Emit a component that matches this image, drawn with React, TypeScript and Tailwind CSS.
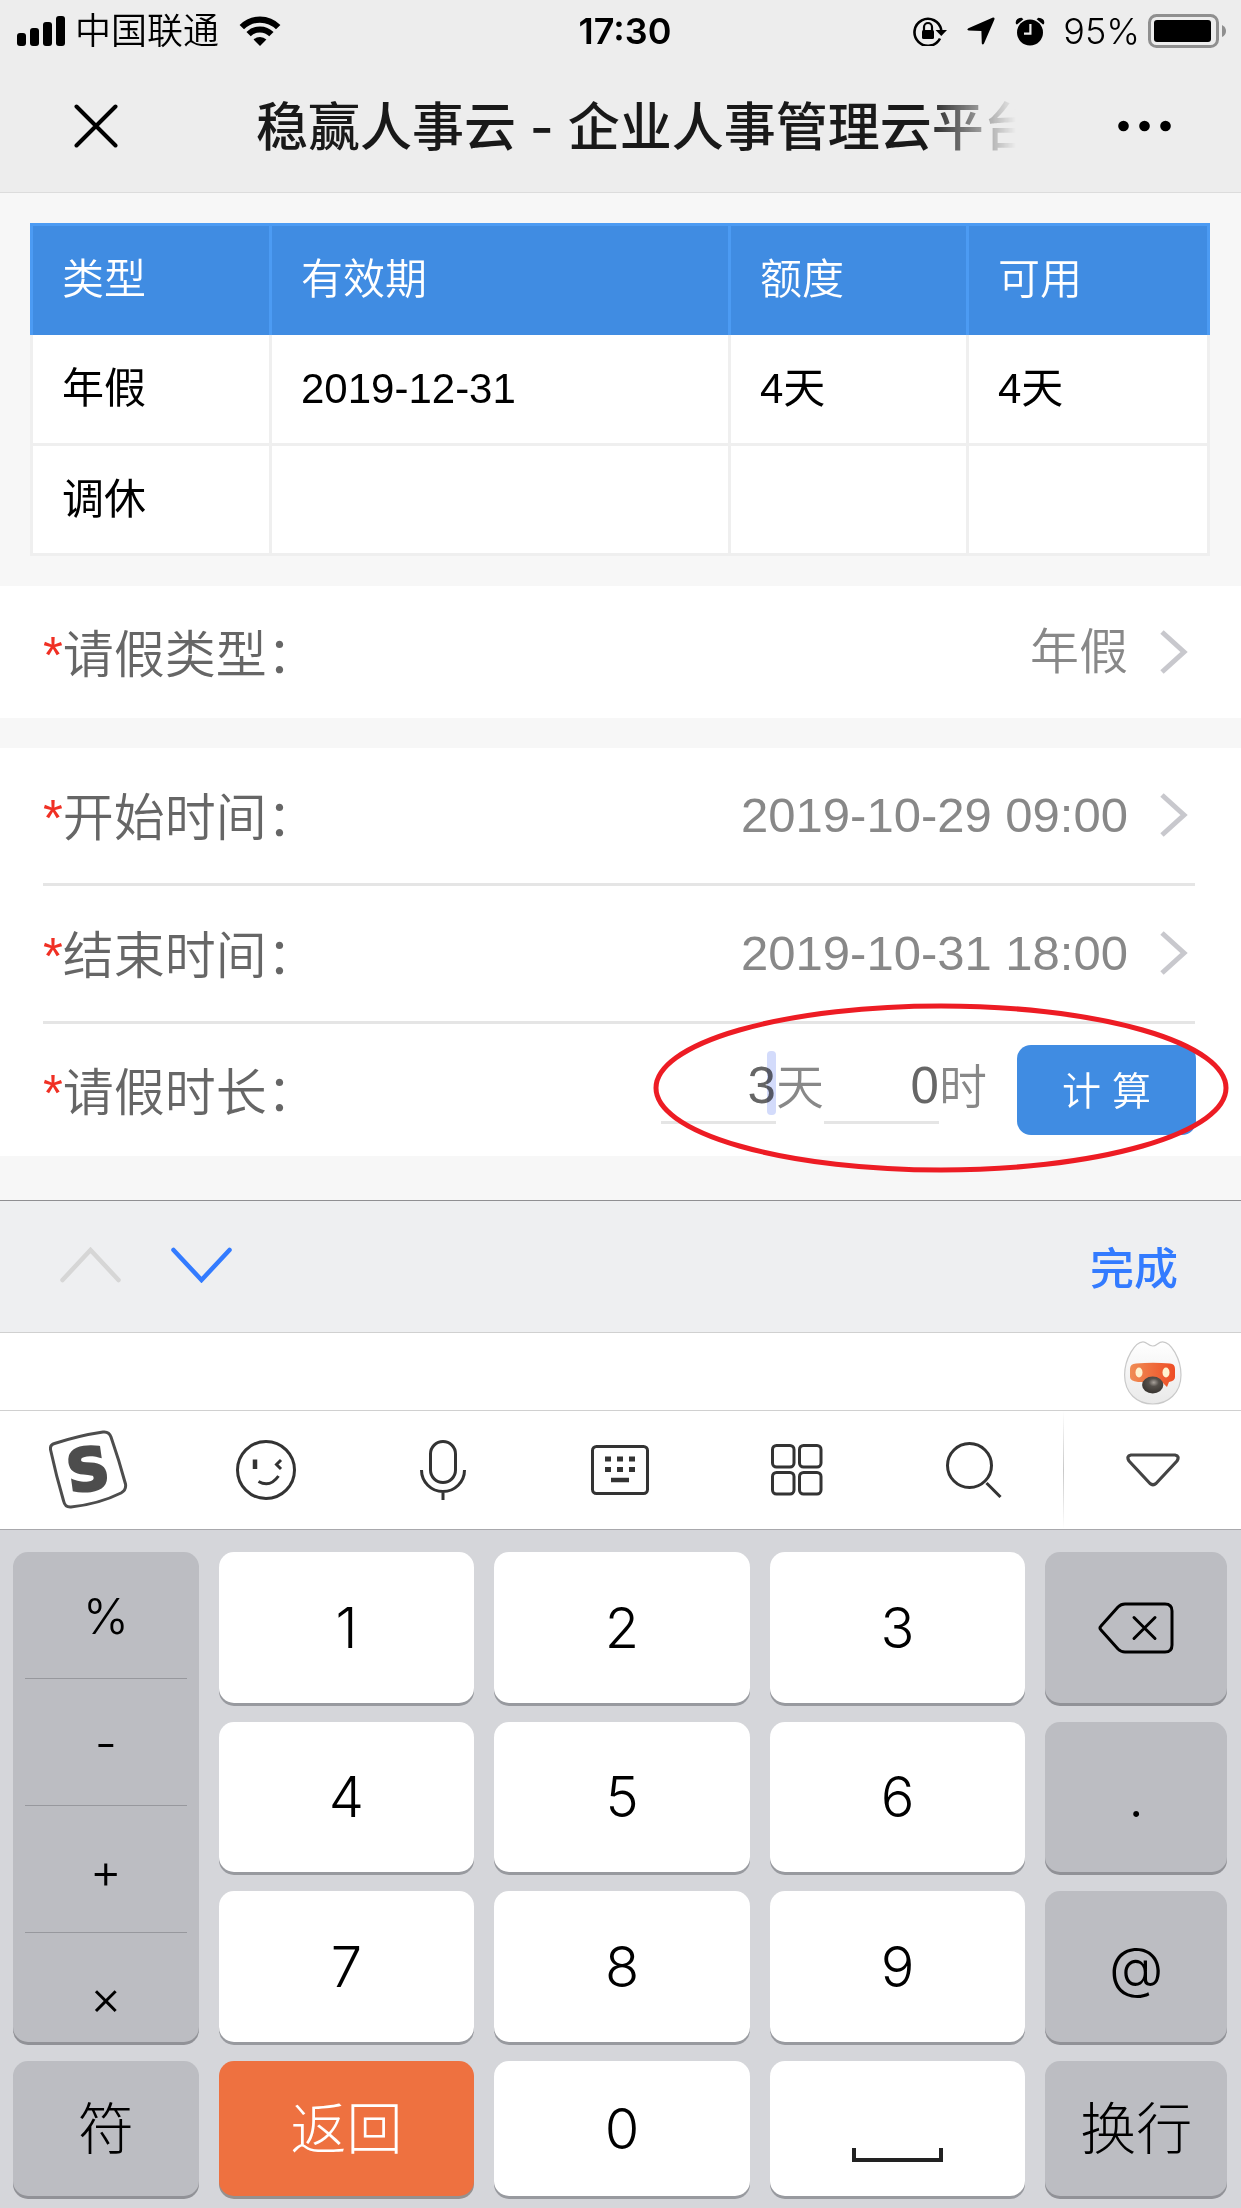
import React, { useState } from 'react';

interface LeaveBalance {
  type: string;
  expires: string;
  quota: string;
  available: string;
}

const balances: LeaveBalance[] = [
  { type: '年假', expires: '2019-12-31', quota: '4天', available: '4天' },
  { type: '调休', expires: '', quota: '', available: '' },
];

const StatusBar = () => (
  <div className="flex items-center justify-between pl-[17px] pr-[14px] pt-2 h-[54px] text-[36px] leading-[46px] text-black font-[family-name:Inter,'Noto_Sans_CJK_SC',sans-serif]">
    <div className="flex flex-1 items-center">
      <svg width="48" height="30" viewBox="0 0 48 30" aria-hidden="true">
        <rect x="0" y="17" width="9" height="13" rx="3" />
        <rect x="13" y="12" width="9" height="18" rx="3" />
        <rect x="26" y="6" width="9" height="24" rx="3" />
        <rect x="39" y="0" width="9" height="30" rx="3" />
      </svg>
      <span className="ml-[10px] font-[350]">中国联通</span>
      <svg className="ml-5" width="42" height="30" viewBox="0 0 42 30" fill="none" stroke="black" aria-hidden="true">
        <path d="M2.8 11.2 A25.5 25.5 0 0 1 39.2 11.2" strokeWidth="6.2" />
        <path d="M9.6 18.2 A16 16 0 0 1 32.4 18.2" strokeWidth="6" />
        <path d="M21 30 L14.6 23.6 A9 9 0 0 1 27.4 23.6 Z" fill="black" stroke="none" />
      </svg>
    </div>
    <span className="pl-1.5 font-semibold">17:30</span>
    <div className="flex flex-1 items-center justify-end">
      <svg width="35" height="30" viewBox="0 0 35 30" aria-hidden="true">
        <path d="M27 22.5 A13.5 13.5 0 1 1 28.3 14" fill="none" stroke="black" strokeWidth="2.6" />
        <path d="M22.5 14 H34 L28.3 20 Z" />
        <rect x="9" y="14" width="12" height="9" rx="1.5" />
        <path d="M11 15 V11 A4 4 0 0 1 19 11 V15" fill="none" stroke="black" strokeWidth="2.2" />
      </svg>
      <svg className="ml-[19px]" width="28" height="28" viewBox="0 0 28 28" aria-hidden="true">
        <path d="M26 .4 Q28 .3 27.4 2.4 L17 26.6 Q15.6 28.6 14.8 26.4 L14.4 14 L1.6 13.5 Q-.8 12.8 1.4 11.2 Z" />
      </svg>
      <svg className="ml-5" width="30" height="29" viewBox="0 0 30 29" aria-hidden="true">
        <circle cx="15" cy="15.5" r="13" />
        <path d="M1 7 Q-.6 1.6 6.6 .8 L8.4 2.2 L2 7.6 Z M29 7 Q30.6 1.6 23.4 .8 L21.6 2.2 L28 7.6 Z" />
        <path d="M15.4 7 V16.6 H9" fill="none" stroke="#ededed" strokeWidth="2.2" />
      </svg>
      <span className="ml-[18px] font-light">95%</span>
      <svg className="ml-2" width="79" height="34" viewBox="0 0 79 34" aria-hidden="true">
        <rect x="1.5" y="1.5" width="68" height="31" rx="7" fill="none" stroke="#8f8f8f" strokeWidth="3" />
        <rect x="6" y="6" width="57" height="22" rx="3" />
        <path d="M74 11 Q78 13 78 17 Q78 21 74 23 Z" fill="#8f8f8f" />
      </svg>
    </div>
  </div>
);

const TitleBar = () => (
  <div className="flex items-center pl-[74px] pr-[70px] pt-[30px] pb-[24px]">
    <button type="button" aria-label="关闭">
      <svg width="44" height="44" viewBox="0 0 44 44" stroke="black" strokeWidth="4" strokeLinecap="round">
        <path d="M2.5 2.5 L41.5 41.5 M41.5 2.5 L2.5 41.5" />
      </svg>
    </button>
    <h1 className="ml-[138px] mr-[102px] flex-1 overflow-hidden whitespace-nowrap pt-1 text-[52px] leading-[80px] font-medium text-[#191919] font-[family-name:Inter,'Noto_Sans_CJK_SC',sans-serif] [mask-image:linear-gradient(to_right,black_88%,transparent)]">
      稳赢人事云 - 企业人事管理云平台
    </h1>
    <button type="button" aria-label="更多">
      <svg width="53" height="12" viewBox="0 0 53 12">
        <circle cx="5.5" cy="6" r="5.3" />
        <circle cx="26.5" cy="6" r="5.3" />
        <circle cx="47.5" cy="6" r="5.3" />
      </svg>
    </button>
  </div>
);

const BalanceTable = () => (
  <table className="w-full table-fixed border-collapse text-left text-[42px] leading-[60px]">
    <colgroup>
      <col className="w-[239px]" />
      <col />
      <col className="w-[238px]" />
      <col className="w-[241px]" />
    </colgroup>
    <thead>
      <tr className="bg-[#408ce2] text-white">
        {['类型', '有效期', '额度', '可用'].map(title => (
          <th key={title} className="h-[110px] border-x-3 border-t-3 border-[#4c9bf3] px-[29px] font-[350]">{title}</th>
        ))}
      </tr>
    </thead>
    <tbody className="bg-white text-black">
      {balances.map(row => (
        <tr key={row.type}>
          {[row.type, row.expires, row.quota, row.available].map((cell, i) => (
            <td key={i} className="h-[110px] border-x-3 border-b-3 border-[#efefef] px-[29px]">{cell}</td>
          ))}
        </tr>
      ))}
    </tbody>
  </table>
);

const FieldLabel = ({ htmlFor, children }: { htmlFor: string, children: React.ReactNode }) => (
  <label htmlFor={htmlFor} className="flex-1 pt-1.5 text-[51px] leading-[71px] text-[#666] font-[350]">
    <span className="text-[#f03024]">*</span>{children}
  </label>
);

const PickerRow = ({ id, label, value }: { id: string, label: string, value: string }) => (
  <div className="flex items-center min-h-[132px] py-6">
    <FieldLabel htmlFor={id}>{label}</FieldLabel>
    <button type="button" id={id} className="flex items-center pr-[7px] text-[49px] leading-[71px] text-[#888] font-[350]">
      {value}
      <svg className="ml-8" width="28" height="44" viewBox="0 0 28 44" fill="none" stroke="#c8c8cd" strokeWidth="5">
        <path d="M2 2 L24 22 L2 42" />
      </svg>
    </button>
  </div>
);

const DurationRow = () => {
  const [days, setDays] = useState('3');
  const [hours, setHours] = useState('0');
  const inputStyle = 'w-[115px] h-[73px] border-b-3 border-[#e5e5e5] text-right text-[51px] text-[#666] outline-none';

  return (
    <div className="relative flex items-center min-h-[132px] pl-[43px] pr-[45px]">
      <FieldLabel htmlFor="days">请假时长：</FieldLabel>
      <div className="flex items-center mb-1.5 mr-[30px] text-[48px] leading-[71px] text-[#888] font-[350]">
        <div className="relative flex">
          <input id="days" className={inputStyle} value={days} onChange={e => setDays(e.target.value)} />
          <span className="absolute right-0 top-0 w-[9px] h-16 rounded-sm bg-[#d3dbfb] mix-blend-multiply" />
        </div>
        <span>天</span>
        <input aria-label="小时" className={inputStyle} value={hours} onChange={e => setHours(e.target.value)} />
        <span>时</span>
      </div>
      <button type="button" className="w-[179px] h-[90px] rounded-[14px] bg-[#408ce2] pt-1 text-[39px] text-white font-[350]">计 算</button>
      <svg className="absolute right-[12px] top-[-22px] pointer-events-none" width="576" height="172" viewBox="0 0 576 172" fill="none" aria-hidden="true">
        <ellipse cx="288" cy="86" rx="285" ry="82" stroke="#ed1c24" strokeWidth="5" />
      </svg>
    </div>
  );
};

const FormAccessory = () => (
  <div className="flex items-center justify-between border-t border-[#8f8f92] bg-[#eeeff1] pl-[60px] pr-[63px] h-[132px]">
    <div className="flex gap-[50px] pb-1">
      <button type="button" aria-label="上一项" disabled>
        <svg width="61" height="36" viewBox="0 0 61 36" fill="none" stroke="#d6d6d6" strokeWidth="4.5" strokeLinecap="round">
          <path d="M2.5 33 L30.5 3 L58.5 33" />
        </svg>
      </button>
      <button type="button" aria-label="下一项">
        <svg width="61" height="36" viewBox="0 0 61 36" fill="none" stroke="#337bff" strokeWidth="4.5" strokeLinecap="round">
          <path d="M2.5 3 L30.5 33 L58.5 3" />
        </svg>
      </button>
    </div>
    <button type="button" className="pt-1.5 text-[44px] leading-[60px] font-medium text-[#337bff]">完成</button>
  </div>
);

const Mascot = () => (
  <svg width="60" height="68" viewBox="-1 -1 60 68" aria-hidden="true">
    <defs>
      <linearGradient id="face" x1="0" y1="0" x2="0" y2="1">
        <stop offset="0" stopColor="#fff" />
        <stop offset="1" stopColor="#e9e9e9" />
      </linearGradient>
      <linearGradient id="visor">
        <stop offset="0" stopColor="#f08d55" />
        <stop offset="1" stopColor="#ee4d25" />
      </linearGradient>
      <radialGradient id="nose" cx=".55" cy=".35" r=".6">
        <stop offset="0" stopColor="#a8a19b" />
        <stop offset=".4" stopColor="#56514c" />
        <stop offset="1" stopColor="#3b3733" />
      </radialGradient>
    </defs>
    <path d="M19 .8 C23 .8 24 5 28.7 5 C33 5 34 .8 38.5 .8 C47 .8 57 18 57 34 C57 52 44 63 28.7 63 C13 63 .6 52 .6 34 C.6 18 11 .8 19 .8 Z" fill="url(#face)" stroke="#c9c9c9" strokeWidth="1.2" />
    <path d="M6 28 Q6 23 12 22.6 Q29 21 46 22.6 Q51 23 51 28 V36 Q51 40 45 41 L43 46 L38 41 H14 Q6 40 6 36 Z" fill="url(#visor)" />
    <ellipse cx="15" cy="31.5" rx="3.5" ry="5" fill="#fff3d0" />
    <ellipse cx="42" cy="31.5" rx="3.5" ry="5" fill="#fff3d0" />
    <ellipse cx="28.7" cy="44" rx="10.6" ry="8.4" fill="url(#nose)" />
  </svg>
);

const tools = [
  {
    label: '搜狗输入法',
    icon: (
      <svg width="80" height="80" viewBox="0 0 80 80">
        <path d="M1.6 20 Q.6 15 5.5 13.5 Q30 5.5 54 2 Q60 1.2 62 7 Q70 30 76.5 54 Q77.5 60 72 63 Q50 74 22 77 Q16 77.5 14.6 71 Q7 45 1.6 20 Z" fill="none" stroke="#4d4d4d" strokeWidth="3" />
        <text x="39" y="60" textAnchor="middle" transform="rotate(-8 39 40)" fontFamily="DejaVu Sans" fontWeight="bold" fontSize="58" fill="#4d4d4d" stroke="#4d4d4d" strokeWidth="3">S</text>
      </svg>
    ),
  },
  {
    label: '表情',
    icon: (
      <svg width="60" height="60" viewBox="0 0 60 60" fill="none" stroke="#333" strokeWidth="3">
        <circle cx="30" cy="30" r="28.5" />
        <path d="M19 19.5 V29" strokeWidth="4.5" />
        <path d="M45 20 L40.5 24.5 L45 29" />
        <path d="M22.5 41.5 Q34 48 42.5 36" />
      </svg>
    ),
  },
  {
    label: '语音',
    icon: (
      <svg width="46" height="60" viewBox="0 0 46 60" fill="none" stroke="#333" strokeWidth="3">
        <rect x="10.5" y="1.5" width="25" height="41" rx="12.5" />
        <path d="M1.5 30 A21.5 21.5 0 0 0 44.5 30 M23 51.5 V60" />
      </svg>
    ),
  },
  {
    label: '键盘',
    icon: (
      <svg width="58" height="50" viewBox="0 0 58 50">
        <rect x="1.5" y="1.5" width="55" height="47" rx="4" fill="none" stroke="#333" strokeWidth="3" />
        <path d="M14 14 H44 M14 24.5 H44" stroke="#333" strokeWidth="5" strokeDasharray="6 6" />
        <path d="M20 35 H38" stroke="#333" strokeWidth="4.5" />
      </svg>
    ),
  },
  {
    label: '更多工具',
    icon: (
      <svg width="52" height="52" viewBox="0 0 52 52" fill="none" stroke="#333" strokeWidth="3">
        <rect x="1.5" y="1.5" width="21.5" height="21.5" rx="4" />
        <rect x="28.5" y="1.5" width="21.5" height="21.5" rx="4" />
        <rect x="1.5" y="28.5" width="21.5" height="21.5" rx="4" />
        <rect x="28.5" y="28.5" width="21.5" height="21.5" rx="4" />
      </svg>
    ),
  },
  {
    label: '搜索',
    icon: (
      <svg width="56" height="56" viewBox="0 0 56 56" fill="none" stroke="#333" strokeWidth="3">
        <circle cx="23.5" cy="23.5" r="22" />
        <path d="M40.5 41 L54.5 55" />
      </svg>
    ),
  },
];

const KeyboardToolbar = () => (
  <div className="flex h-[118px] items-stretch bg-white">
    {tools.map(tool => (
      <button key={tool.label} type="button" aria-label={tool.label} className="flex flex-1 items-center justify-center">
        {tool.icon}
      </button>
    ))}
    <div className="w-px bg-linear-to-b from-white via-[#c8c8c8] to-white" />
    <button type="button" aria-label="收起键盘" className="flex w-[177px] items-center justify-center">
      <svg width="54" height="34" viewBox="0 0 54 34" fill="none" stroke="#444" strokeWidth="3.2" strokeLinejoin="round">
        <path d="M5 2 H49 Q54 3 51 8 L30 30.5 Q27 33 24 30.5 L3 8 Q0 3 5 2 Z" />
      </svg>
    </button>
  </div>
);

const keyShapes = {
  white: 'bg-white text-black shadow-[0_3px_0_#989a9f]',
  gray: 'bg-[#bcbdc2] text-black shadow-[0_3px_0_#919297]',
  orange: 'bg-[#ee7140] text-white shadow-[0_3px_0_#96918f]',
};

const Key = ({ tone = 'white', label, children }: { tone?: keyof typeof keyShapes, label?: string, children: React.ReactNode, key?: any }) => (
  <button
    type="button"
    aria-label={label}
    className={`flex items-center justify-center rounded-[15px] text-[56px] font-light ${keyShapes[tone]}`}
  >
    {children}
  </button>
);

const Keypad = () => (
  <div className="grid flex-1 grid-cols-[186fr_256fr_256fr_256fr_182fr] grid-rows-[151px_150px_151px_135px] gap-x-5 gap-y-[19px] bg-[#d5d6da] pt-[22px] pb-3 pl-[13px] pr-[14px] font-[family-name:Inter,'Noto_Sans_CJK_SC',sans-serif]">
    <div className={`row-span-3 flex flex-col rounded-[15px] px-3 text-[49px] font-light ${keyShapes.gray}`}>
      {['%', '-', '+'].map(symbol => (
        <button key={symbol} type="button" className="h-[127px] border-b border-[#97989d] pt-1">{symbol}</button>
      ))}
      <button type="button" className="flex-1 pt-5">×</button>
    </div>
    {['1', '2', '3'].map(n => <Key key={n}>{n}</Key>)}
    <Key tone="gray" label="删除">
      <svg width="76" height="52" viewBox="0 0 76 52" fill="none" stroke="black" strokeWidth="3" strokeLinecap="round" strokeLinejoin="round">
        <path d="M27 2 H67 Q74 2 74 9 V43 Q74 50 67 50 H27 Q23 50 20 47 L3 28 Q1 26 3 24 L20 5 Q23 2 27 2 Z" />
        <path d="M36 15.5 L57 36.5 M57 15.5 L36 36.5" />
      </svg>
    </Key>
    {['4', '5', '6'].map(n => <Key key={n}>{n}</Key>)}
    <Key tone="gray">.</Key>
    {['7', '8', '9'].map(n => <Key key={n}>{n}</Key>)}
    <Key tone="gray">@</Key>
    <Key tone="gray">符</Key>
    <Key tone="orange">返回</Key>
    <Key>0</Key>
    <Key label="空格">
      <span className="mt-[52px] h-[14px] w-[91px] border-x-4 border-b-4 border-[#222]" />
    </Key>
    <Key tone="gray">换行</Key>
  </div>
);

export default function App() {
  return (
    <div className="flex min-h-screen flex-col bg-[#f7f7f7] font-[family-name:'Liberation_Sans','Noto_Sans_CJK_SC',sans-serif]">
      <header className="border-b border-[#dcdcdc] bg-[#ededed]">
        <StatusBar />
        <TitleBar />
      </header>

      <main className="flex-1">
        <div className="pl-[30px] pr-[31px] pt-[30px] pb-[30px]">
          <BalanceTable />
        </div>
        <section className="bg-white pl-[43px] pr-[46px]">
          <PickerRow id="leave-type" label="请假类型：" value="年假" />
        </section>
        <section className="mt-[30px] mb-11 bg-white">
          <div className="ml-[43px] mr-[46px] border-b-3 border-[#e5e5e5] pt-px pb-0.5">
            <PickerRow id="start-time" label="开始时间：" value="2019-10-29 09:00" />
          </div>
          <div className="ml-[43px] mr-[46px] border-b-3 border-[#e5e5e5] pt-px pb-0.5">
            <PickerRow id="end-time" label="结束时间：" value="2019-10-31 18:00" />
          </div>
          <DurationRow />
        </section>
      </main>

      <footer className="flex flex-col">
        <FormAccessory />
        <div className="flex h-[79px] items-center justify-end border-y border-[#d0d0d0] bg-white pr-[58px] pt-1">
          <Mascot />
        </div>
        <KeyboardToolbar />
        <div className="flex border-t border-[#a8a8ac]">
          <Keypad />
        </div>
      </footer>
    </div>
  );
}
